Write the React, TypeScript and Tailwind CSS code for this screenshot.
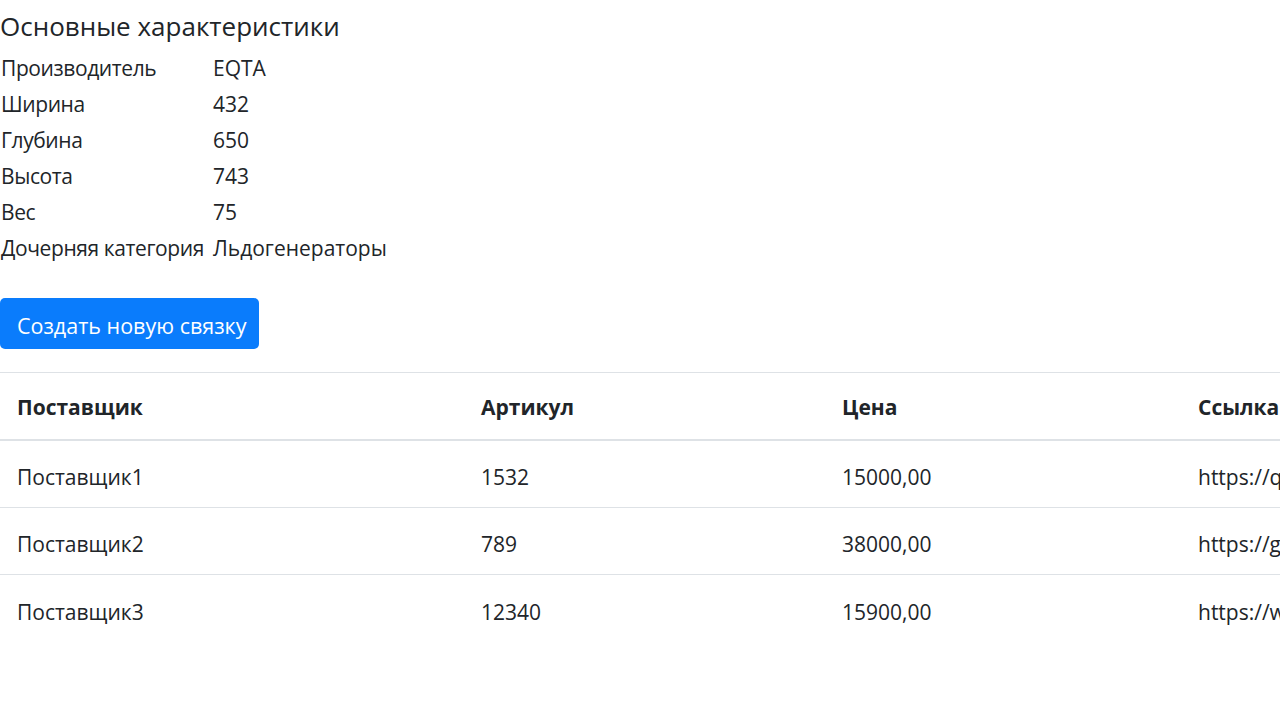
import React from "react";

const specs: [string, string][] = [
  ["Производитель", "EQTA"],
  ["Ширина", "432"],
  ["Глубина", "650"],
  ["Высота", "743"],
  ["Вес", "75"],
  ["Дочерняя категория", "Льдогенераторы"],
];

const rows = [
  ["Поставщик1", "1532", "15000,00", "https://q"],
  ["Поставщик2", "789", "38000,00", "https://g"],
  ["Поставщик3", "12340", "15900,00", "https://w"],
];

export default function App() {
  return (
    <div
      className="w-[1280px] h-[718px] overflow-hidden bg-white text-[#212529]"
      style={{ fontFamily: '"Open Sans", "Noto Sans", sans-serif' }}
    >
      <h5 className="h-[50px] flex items-center text-[26px] leading-[30px] pt-[2px] font-normal">
        Основные характеристики
      </h5>
      <div className="grid grid-cols-[212px_auto] text-[21px] leading-[36px] pl-[1px]">
        {specs.map(([k, v]) => (
          <React.Fragment key={k}>
            <div className="whitespace-nowrap tracking-[-0.4px]">{k}</div>
            <div className="whitespace-nowrap">{v}</div>
          </React.Fragment>
        ))}
      </div>
      <div className="mt-[32px]">
        <button className="h-[51px] w-[259px] rounded-[5px] bg-[#0a7cfc] text-white text-[21.5px] text-left pl-[17px] pt-[5px]">
          Создать новую связку
        </button>
      </div>
      <div className="mt-[23px] w-[1400px] border-t border-[#dee2e6] text-[21px]">
        <div className="grid grid-cols-[464px_361px_356px_219px] h-[68px] items-center border-b-[2px] border-[#dee2e6] font-bold pt-[4px]">
          <div className="pl-[17px]">Поставщик</div>
          <div className="pl-[17px]">Артикул</div>
          <div className="pl-[17px]">Цена</div>
          <div className="pl-[17px]">Ссылка</div>
        </div>
        {rows.map((r, i) => (
          <div
            key={i}
            className={`grid grid-cols-[464px_361px_356px_219px] h-[67px] items-center pt-[8px] ${i < 2 ? "border-b border-[#dee2e6]" : ""}`}
          >
            {r.map((c, j) => (
              <div key={j} className="pl-[17px] whitespace-nowrap">
                {c}
              </div>
            ))}
          </div>
        ))}
      </div>
    </div>
  );
}
